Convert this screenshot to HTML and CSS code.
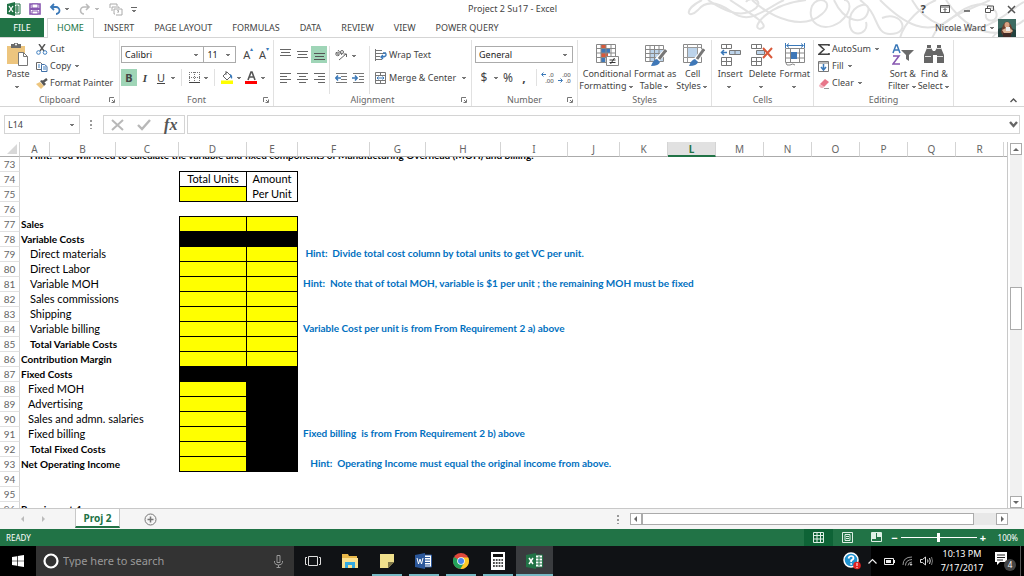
FILE: index.html
```html
<!DOCTYPE html>
<html lang="en">
<head>
	<meta charset="utf-8">
	<title>Project 2 Su17 - Excel</title>
	<link rel="stylesheet" href="styles.css">
</head>
<body>

<header class="titlebar">
	<svg class="swirl" viewBox="0 0 340 38" width="340" height="38">
		<g fill="none" stroke="#e2e2e2" stroke-width="2">
			<path d="M18 0C-2 10 4 20 14 10C22 0 34 2 48 12C66 26 82 8 100 0"/>
			<path d="M24 0C44 14 60 18 72 8C80 0 66 -4 62 2M46 0C70 16 88 26 76 29C66 28 84 4 122 0"/>
			<path d="M68 0C90 20 120 30 138 14C152 2 134 -6 128 6C122 22 138 34 156 22C170 10 166 0 160 0"/>
			<path d="M150 0C160 22 180 26 184 12C188 0 168 4 166 18C162 40 186 36 182 22M176 0C196 14 190 34 206 34C228 34 218 10 198 18"/>
			<path d="M196 0C220 24 244 38 268 18C286 2 304 0 312 12C316 22 300 24 302 14M228 0C240 22 270 36 296 28C320 20 328 8 340 2"/>
			<path d="M262 0C276 22 300 40 328 30M248 38C256 18 286 10 306 0M216 38C220 22 238 6 252 0M308 38C316 26 330 30 340 20"/>
		</g>
	</svg>
	<div class="quick">
		<svg width="14" height="14" viewBox="0 0 14 14"><path d="M7 2h6v10H7z" fill="#fff" stroke="#217346"/><path d="M8 5h4M8 7h4M8 9h4M10 3v8" stroke="#217346"/><path d="M0 2l8-2v14l-8-2z" fill="#217346"/><path d="M2 4l4 6M6 4l-4 6" stroke="#fff" stroke-width="1.3"/></svg>
		<button aria-label="Save"><svg width="12" height="12" viewBox="0 0 12 12"><path d="M1 1h10v10H1z" fill="#fff" stroke="#8757b0" stroke-width="1.6"/><path d="M3 1h6v4H3zM3 8h6v3H3z" fill="#fff" stroke="#8757b0"/><path d="M1 5h10v2H1z" fill="#8757b0"/></svg></button>
		<button aria-label="Undo"><svg width="12" height="12" viewBox="0 0 12 12"><path d="M2 4h5a3.3 3.3 0 010 7M5 1L2 4l3 3" fill="none" stroke="#3a78b8" stroke-width="1.8"/></svg><i class="caret"></i></button>
		<button aria-label="Redo"><svg width="12" height="12" viewBox="0 0 12 12"><path d="M10 4H5a3.3 3.3 0 000 7M7 1l3 3-3 3" fill="none" stroke="#bbb" stroke-width="1.6"/></svg><i class="caret pale"></i></button>
		<button aria-label="Group help"><svg width="14" height="13" viewBox="0 0 14 13" fill="none" stroke="#aaa"><path d="M1 5V1h7v2M3 8V4h7v1M6 11H5V6h8v6H7"/><path d="M8 8q1-1 2 0l-1 1v1"/></svg></button>
		<button aria-label="Customize toolbar"><i class="caret over"></i></button>
	</div>
	<h1>Project 2 Su17 - Excel</h1>
	<div class="winbtns">
		<button aria-label="Help"><b>?</b></button>
		<button aria-label="Ribbon options"><svg width="10" height="9" viewBox="0 0 10 9" fill="none" stroke="#555"><path d="M.5.5h9v7h-9zM.5 2h9M5 7V4M3.500 5L5 3.500 6.500 5"/></svg></button>
		<button aria-label="Minimize"><svg width="8" height="8" viewBox="0 0 8 8"><path d="M1 6h6" stroke="#555" stroke-width="1.5"/></svg></button>
		<button aria-label="Restore"><svg width="9" height="9" viewBox="0 0 9 9" fill="none" stroke="#555"><path d="M.5 3.500h5v4h-5zM2.500 3V1h6v4.500H6"/></svg></button>
		<button aria-label="Close"><svg width="9" height="9" viewBox="0 0 9 9"><path d="M1 1l7 7M8 1L1 8" stroke="#555" stroke-width="1.5"/></svg></button>
	</div>
</header>

<nav class="tabs">
	<a class="file" href="#">FILE</a>
	<a class="active" href="#">HOME</a>
	<a href="#">INSERT</a>
	<a href="#">PAGE LAYOUT</a>
	<a href="#">FORMULAS</a>
	<a href="#">DATA</a>
	<a href="#">REVIEW</a>
	<a href="#">VIEW</a>
	<a href="#">POWER QUERY</a>
	<button class="user">Nicole Ward <i class="caret"></i>
		<svg width="18" height="18" viewBox="0 0 18 18"><path d="M0 0h18v18H0z" fill="#3d6b62"/><path d="M0 10l5-2v10H0zM13 9l5 2v7h-5z" fill="#23423f"/><path d="M5 6q4-7 8 0l2 6-3 6H6l-3-5z" fill="#6b4030"/><ellipse cx="9" cy="6" rx="2.500" ry="3" fill="#d9a282"/><path d="M4 11l4-2h4l3 3-3 2H6z" fill="#dcb598"/><path d="M8 8h4v4H8z" fill="#eee"/><path d="M5 14h8v4H5z" fill="#432b27"/></svg>
	</button>
</nav>

<section class="ribbon">
	<div class="group clipboard">
		<div class="body">
			<button class="big paste"><svg width="22" height="24" viewBox="0 0 22 24"><path d="M0 3h18v18H0z" fill="#edc57e"/><path d="M4 1h3a2 2 0 014 0h3v4H4z" fill="#6b6b6b"/><circle cx="9" cy="1.500" r="1" fill="#fff"/><path d="M11.500 9.500h5l4 4v9h-9z" fill="#fff" stroke="#777"/><path d="M16.500 9.500v4h4" fill="none" stroke="#777"/></svg><span>Paste<br><i class="caret"></i></span></button>
			<div class="stack">
				<button><svg width="12" height="11" viewBox="0 0 12 11"><path d="M3 0l5 7M9 0L4 7" stroke="#555" stroke-width="1.4"/><circle cx="2.500" cy="8.500" r="1.800" fill="none" stroke="#3f7fc0"/><circle cx="9" cy="8.500" r="1.800" fill="none" stroke="#3f7fc0"/></svg>Cut</button>
				<button><svg width="12" height="11" viewBox="0 0 12 11"><path d="M.5 1.500h4l2 2v5h-6z" fill="#fff" stroke="#666"/><path d="M5.500 3.500h3l2.500 2v5H5.500z" fill="#fff" stroke="#3f6fa8"/><path d="M2 4h2M2 6h2M7 6h3M7 8h3" stroke="#3f7fc0"/></svg>Copy <i class="caret"></i></button>
				<button><svg width="12" height="11" viewBox="0 0 12 11"><path d="M0 6l4-2 4 4-3 3z" fill="#edc57e"/><path d="M4 3l2-1 4 4-2 2z" fill="#555"/><path d="M7 4l4-3" stroke="#555" stroke-width="2.400"/></svg>Format Painter</button>
			</div>
		</div>
		<div class="name"><span>Clipboard</span><svg class="launch" width="6" height="6" viewBox="0 0 6 6"><path d="M.5 5V.5H5M3 3l2 2M5.500 2.500v3h-3" fill="none" stroke="#777"/></svg></div>
	</div>

	<div class="group font">
		<div class="body rows">
			<div class="row">
				<select class="face" aria-label="Font"><option>Calibri</option></select>
				<select class="size" aria-label="Font size"><option>11</option></select>
				<button class="tool grow" aria-label="Increase font size">A<sup>▴</sup></button>
				<button class="tool shrink" aria-label="Decrease font size">A<sup>▾</sup></button>
			</div>
			<div class="row">
				<button class="tool on"><b>B</b></button>
				<button class="tool"><em>I</em></button>
				<button class="tool"><u>U</u></button><i class="caret"></i>
				<span class="sep"></span>
				<button class="tool" aria-label="Borders"><svg width="11" height="11" viewBox="0 0 11 11" fill="none" stroke="#777"><path d="M.5 0v10M5.500 0v10M10.500 0v10M0 .5h11M0 5.500h11" stroke-dasharray="1 1"/><path d="M0 10.500h11" stroke="#444"/></svg></button><i class="caret"></i>
				<span class="sep"></span>
				<button class="tool" aria-label="Fill color"><svg width="13" height="13" viewBox="0 0 13 13"><path d="M2 5l4-4 4 4-4 4zM5 4V0" fill="#fff" stroke="#666"/><path d="M9 3q3 1 2 5l-2-2z" fill="#3a78b8"/><path d="M0 9.500h12V13H0z" fill="#ff0"/></svg></button><i class="caret"></i>
				<button class="tool" aria-label="Font color"><svg width="13" height="13" viewBox="0 0 13 13"><path d="M3 9l3-8h1l3 8M4.300 6h4.400" fill="none" stroke="#555" stroke-width="1.600"/><path d="M0 10h12v3H0z" fill="#f00"/></svg></button><i class="caret"></i>
			</div>
		</div>
		<div class="name"><span>Font</span><svg class="launch" width="6" height="6" viewBox="0 0 6 6"><path d="M.5 5V.5H5M3 3l2 2M5.500 2.500v3h-3" fill="none" stroke="#777"/></svg></div>
	</div>

	<div class="group align">
		<div class="body cols">
			<div class="pad">
				<button class="tool" aria-label="Top align"><svg width="11" height="11" viewBox="0 0 11 11"><path d="M0 .5h11M1 3.500h9M0 6.500h11" stroke="#666"/></svg></button>
				<button class="tool" aria-label="Middle align"><svg width="11" height="11" viewBox="0 0 11 11"><path d="M0 2.500h11M1 5.500h9M0 8.500h11" stroke="#666"/></svg></button>
				<button class="tool on" aria-label="Bottom align"><svg width="11" height="11" viewBox="0 0 11 11"><path d="M0 4.500h11M1 7.500h9M0 10.500h11" stroke="#555"/></svg></button>
				<button class="tool" aria-label="Align left"><svg width="11" height="11" viewBox="0 0 11 11"><path d="M0 1.500h11M0 4.500h7M0 7.500h11M0 10.500h7" stroke="#666"/></svg></button>
				<button class="tool" aria-label="Center"><svg width="11" height="11" viewBox="0 0 11 11"><path d="M0 1.500h11M2 4.500h7M0 7.500h11M2 10.500h7" stroke="#666"/></svg></button>
				<button class="tool" aria-label="Align right"><svg width="11" height="11" viewBox="0 0 11 11"><path d="M0 1.500h11M4 4.500h7M0 7.500h11M4 10.500h7" stroke="#666"/></svg></button>
			</div>
			<div class="pad two">
				<button class="tool" aria-label="Orientation"><svg width="13" height="12" viewBox="0 0 13 12" fill="none" stroke="#666"><circle cx="2.500" cy="5" r="1.700"/><path d="M4 7L1 3M3 1l4 5"/><circle cx="7" cy="3" r="1.500"/><path d="M4 11l7-6M8.500 5H11.500v3"/></svg></button><i class="caret"></i>
				<button class="tool" aria-label="Decrease indent"><svg width="13" height="11" viewBox="0 0 13 11"><path d="M1 1.500h11M6 4.500h6M6 7.500h6M1 10.500h11" stroke="#777"/><path d="M6 6H1M3 3.500L.8 6 3 8.500" fill="none" stroke="#3a78b8" stroke-width="1.500"/></svg></button>
				<button class="tool" aria-label="Increase indent"><svg width="13" height="11" viewBox="0 0 13 11"><path d="M1 1.500h11M7 4.500h5M7 7.500h5M1 10.500h11" stroke="#777"/><path d="M0 6h5M3 3.500L5.200 6 3 8.500" fill="none" stroke="#3a78b8" stroke-width="1.500"/></svg></button>
			</div>
			<div class="rows">
				<button class="row text"><svg width="12" height="12" viewBox="0 0 12 12"><path d="M0 1.500h7M0 4.500h10M0 7.500h5M0 10.500h7M.5 0v12" stroke="#777"/><path d="M8 4h2.500q2 4-4 4M8 6L6 8l2 2" fill="none" stroke="#3a78b8" stroke-width="1.400"/></svg>Wrap Text</button>
				<button class="row text"><svg width="12" height="12" viewBox="0 0 12 12" fill="none" stroke="#777"><path d="M.5.5h10v11H.5zM.5 3.500h10M.5 8.500h10M5.500 0v3M5.500 9v3"/><path d="M2 6h7M3.500 4.500L2 6l1.500 1.500M7.500 4.500L9 6 7.500 7.500" stroke="#3a78b8"/></svg>Merge &amp; Center <i class="caret"></i></button>
			</div>
		</div>
		<div class="name"><span>Alignment</span><svg class="launch" width="6" height="6" viewBox="0 0 6 6"><path d="M.5 5V.5H5M3 3l2 2M5.500 2.500v3h-3" fill="none" stroke="#777"/></svg></div>
	</div>

	<div class="group number">
		<div class="body rows">
			<div class="row"><select class="format" aria-label="Number format"><option>General</option></select></div>
			<div class="row">
				<button class="tool sym">$</button><i class="caret"></i>
				<button class="tool sym">%</button>
				<button class="tool sym"><b>,</b></button>
				<span class="sep"></span>
				<button class="tool dec" aria-label="Increase decimal"><small>.0<br>.00</small><svg width="5" height="5" viewBox="0 0 5 5"><path d="M5 2.500H1M2.500.5l-2 2 2 2" fill="none" stroke="#3a78b8"/></svg></button>
				<button class="tool dec end" aria-label="Decrease decimal"><small>.00<br>.0</small><svg width="5" height="5" viewBox="0 0 5 5"><path d="M0 2.500h4M2.500.5l2 2-2 2" fill="none" stroke="#3a78b8"/></svg></button>
			</div>
		</div>
		<div class="name"><span>Number</span><svg class="launch" width="6" height="6" viewBox="0 0 6 6"><path d="M.5 5V.5H5M3 3l2 2M5.500 2.500v3h-3" fill="none" stroke="#777"/></svg></div>
	</div>

	<div class="group styles">
		<div class="body">
			<button class="big wide"><svg width="24" height="24" viewBox="0 0 24 24"><path d="M1 1h20v18H1z" fill="#fff"/><path d="M6 1h5v4H6zM6 10h7v4H6z" fill="#d9593a"/><path d="M6 5.500h9V10H6zM6 15h4v4H6z" fill="#3f78b8"/><path d="M1.500 1.500h19v18h-19zM1 5.500h20M1 10h20M1 14.500h20M6 1v18M11 1v18M16 1v18" fill="none" stroke="#888"/><path d="M11.500 13.500h12v9h-12z" fill="#fff" stroke="#888"/><path d="M14.500 17h6M14.500 19.500h6M19.500 15l-4 6" stroke="#333"/></svg><span>Conditional<br>Formatting <i class="caret"></i></span></button>
			<button class="big"><svg width="24" height="24" viewBox="0 0 24 24"><path d="M2.500 2.500h18v16h-18z" fill="#fff"/><path d="M7 7h13v11H7z" fill="#bcd3ea"/><path d="M2.500 2.500h18v16h-18zM2 6.500h18M2 10.500h18M2 14.500h18M7 2v16M11.500 2v16M16 2v16" fill="none" stroke="#888"/><path d="M23 8L14 17" stroke="#fff" stroke-width="5"/><path d="M23 7l-7 9" stroke="#777" stroke-width="3"/><path d="M8 23q2-6 6-7l3 3q-1 4-9 4z" fill="#3f78b8"/></svg><span>Format as<br>Table <i class="caret"></i></span></button>
			<button class="big"><svg width="24" height="24" viewBox="0 0 24 24"><path d="M2.500 1.500h18v18h-18z" fill="#fff" stroke="#888"/><path d="M6 5h11v9H6z" fill="#bcd3ea"/><path d="M2 4.500h18M2 14.500h18M6.500 1v18M16.500 1v18" stroke="#999"/><path d="M23 7l-9 11" stroke="#fff" stroke-width="5"/><path d="M23 6l-7 10" stroke="#777" stroke-width="3"/><path d="M8 23q2-6 6-7l3 3q-1 4-9 4z" fill="#3f78b8"/></svg><span>Cell<br>Styles <i class="caret"></i></span></button>
		</div>
		<div class="name"><span>Styles</span></div>
	</div>

	<div class="group cells">
		<div class="body">
			<button class="big"><svg width="22" height="24" viewBox="0 0 22 24" fill="none" stroke="#777"><path d="M2.500 1.500h10v4h-10zM7.500 1v4M2.500 14.500h10v8h-10zM7.500 14v8M2 18.500h11"/><path d="M10.500 7.500h11v4h-11zM16 7v4" fill="#bcd3ea"/><path d="M8 9.500H3M5 7L2.500 9.500 5 12" stroke="#3a78b8" stroke-width="1.500"/></svg><span>Insert<br><i class="caret"></i></span></button>
			<button class="big"><svg width="22" height="24" viewBox="0 0 22 24" fill="none" stroke="#777"><path d="M.5 1.500h10v4H.5zM5.500 1v4M.5 14.500h10v8H.5zM5.500 14v8M0 18.500h11"/><path d="M5.500 7.500h8v4h-8z" fill="#bcd3ea"/><path d="M12 5l9 10M21 5l-9 10" stroke="#d9593a" stroke-width="2"/></svg><span>Delete<br><i class="caret"></i></span></button>
			<button class="big"><svg width="24" height="24" viewBox="0 0 24 24" fill="none" stroke="#888"><path d="M2.500 5.500h19v14h-19zM2 10h20M2 15h20M7.500 5v14M16.500 5v14"/><path d="M8 9h6v7H8z" fill="#3f78b8" stroke="none"/><path d="M3 20q0 3 4 2 3-2 5 0"/><path d="M4 2.500h16M6 .5l-2.500 2L6 4.500M18 .5l2.500 2-2.500 2M2.500 0v5M21.500 0v5" stroke="#3a78b8"/></svg><span>Format<br><i class="caret"></i></span></button>
		</div>
		<div class="name"><span>Cells</span></div>
	</div>

	<div class="group editing">
		<div class="body">
			<div class="stack">
				<button><svg width="12" height="11" viewBox="0 0 12 11"><path d="M11 2V.8H1L6 5.500 1 10.200h10V9" fill="none" stroke="#444" stroke-width="1.600"/></svg>AutoSum <i class="caret"></i></button>
				<button><svg width="12" height="11" viewBox="0 0 12 11"><path d="M.5.500h10v10H.5zM0 2h11" fill="none" stroke="#777"/><path d="M5.500 3v6M3 6l2.500 3L8 6" fill="none" stroke="#3a78b8" stroke-width="1.500"/></svg>Fill <i class="caret"></i></button>
				<button><svg width="12" height="11" viewBox="0 0 12 11"><path d="M2 6l5-5 4 3-5 5z" fill="#e8768a"/><path d="M2 6l4 3-1 1H3L.8 8z" fill="#f3b6c0"/><path d="M6 10.500h5" stroke="#999"/></svg>Clear <i class="caret"></i></button>
			</div>
			<button class="big"><svg width="22" height="24" viewBox="0 0 22 24"><path d="M1 10l3-8h1l3 8M2.200 7h4.600" fill="none" stroke="#3a78b8" stroke-width="1.500"/><path d="M1 13h6l-6 8h7" fill="none" stroke="#8757b0" stroke-width="1.500"/><path d="M9 7h13l-5 5v6l-3-2v-4z" fill="#6b6b6b"/></svg><span>Sort &amp;<br>Filter <i class="caret"></i></span></button>
			<button class="big"><svg width="22" height="24" viewBox="0 0 22 24"><path d="M4 2h4v3l2 3h2l2-3V2h4v3l3 7v8h-7v-8h-4v8H1v-8l3-7z" fill="#666"/><path d="M2 13.500h6M14 13.500h6M4 5.500h4M14 5.500h4" stroke="#ddd"/></svg><span>Find &amp;<br>Select <i class="caret"></i></span></button>
		</div>
		<div class="name"><span>Editing</span></div>
	</div>
	<button class="collapse" aria-label="Collapse the ribbon"><svg width="7" height="5" viewBox="0 0 7 5"><path d="M.5 4l3-3 3 3" fill="none" stroke="#555" stroke-width="1.400"/></svg></button>
</section>

<section class="formula">
	<label class="namebox"><input type="text" value="L14" aria-label="Name box"><i class="caret"></i></label>
	<span class="dots"></span>
	<div class="fx">
		<button aria-label="Cancel"><svg width="13" height="12" viewBox="0 0 13 12"><path d="M1 1l11 10M12 1L1 11" stroke="#b8b8b8" stroke-width="2"/></svg></button>
		<button aria-label="Enter"><svg width="14" height="12" viewBox="0 0 14 12"><path d="M1 6l4 4 8-9" fill="none" stroke="#b8b8b8" stroke-width="2.400"/></svg></button>
		<button class="fn"><em>fx</em></button>
	</div>
	<label class="entry"><input type="text" aria-label="Formula"><svg width="9" height="7" viewBox="0 0 9 7"><path d="M1 1l3.500 4L8 1" fill="none" stroke="#666" stroke-width="2.400"/></svg></label>
</section>

<main class="sheet">
	<div class="grid">
		<table class="heads">
			<colgroup><col class="c-num"><col class="c-a"><col class="c-b"><col class="c-c"><col class="c-d"><col class="c-e"><col class="c-f"><col class="c-g"><col class="c-h"><col class="c-i"><col class="c-j"><col class="c-std"><col class="c-std"><col class="c-std"><col class="c-std"><col class="c-std"><col class="c-std"><col class="c-std"><col class="c-std"><col></colgroup>
			<tr><th class="corner"><svg width="10" height="10" viewBox="0 0 10 10"><path d="M10 0v10H0z" fill="#d8d8d8"/></svg></th><th>A</th><th>B</th><th>C</th><th>D</th><th>E</th><th>F</th><th>G</th><th>H</th><th>I</th><th>J</th><th>K</th><th class="sel">L</th><th>M</th><th>N</th><th>O</th><th>P</th><th>Q</th><th>R</th><th></th></tr>
		</table>
		<div class="view">
			<table class="cellset">
				<colgroup><col class="c-num"><col class="c-a"><col class="c-b"><col class="c-c"><col class="c-d"><col class="c-e"><col></colgroup>
				<tr><th>73</th><td colspan="6"><div class="above">Hint:&nbsp; You will need to calculate the variable and fixed components of Manufacturing Overhead (MOH) and billing.</div></td></tr>
				<tr><th>74</th><td colspan="3"></td><td class="box top">Total Units</td><td class="box top open">Amount</td><td></td></tr>
				<tr><th>75</th><td colspan="3"></td><td class="box fill"></td><td class="box">Per Unit</td><td></td></tr>
				<tr><th>76</th><td colspan="3"></td><td></td><td></td><td></td></tr>
				<tr><th>77</th><td colspan="3"><b>Sales</b></td><td class="box fill top"></td><td class="box fill top"></td><td></td></tr>
				<tr><th>78</th><td colspan="3"><b>Variable Costs</b></td><td class="box black"></td><td class="box black"></td><td></td></tr>
				<tr><th>79</th><td colspan="3" class="in2">Direct materials</td><td class="box fill"></td><td class="box fill"></td><td class="hint">&nbsp;Hint:&nbsp; Divide total cost column by total units to get VC per unit.</td></tr>
				<tr><th>80</th><td colspan="3" class="in2">Direct Labor</td><td class="box fill"></td><td class="box fill"></td><td></td></tr>
				<tr><th>81</th><td colspan="3" class="in2">Variable MOH</td><td class="box fill"></td><td class="box fill"></td><td class="hint">Hint:&nbsp; Note that of total MOH, variable is $1 per unit ; the remaining MOH must be fixed</td></tr>
				<tr><th>82</th><td colspan="3" class="in2">Sales commissions</td><td class="box fill"></td><td class="box fill"></td><td></td></tr>
				<tr><th>83</th><td colspan="3" class="in2">Shipping</td><td class="box fill"></td><td class="box fill"></td><td></td></tr>
				<tr><th>84</th><td colspan="3" class="in2">Variable billing</td><td class="box fill"></td><td class="box fill"></td><td class="hint">Variable Cost per unit is from From Requirement 2 a) above</td></tr>
				<tr><th>85</th><td colspan="3" class="in2"><b>Total Variable Costs</b></td><td class="box fill"></td><td class="box fill"></td><td></td></tr>
				<tr><th>86</th><td colspan="3"><b>Contribution Margin</b></td><td class="box fill"></td><td class="box fill"></td><td></td></tr>
				<tr><th>87</th><td colspan="3"><b>Fixed Costs</b></td><td class="box black"></td><td class="box black"></td><td></td></tr>
				<tr><th>88</th><td colspan="3" class="in1">Fixed MOH</td><td class="box fill"></td><td class="box black"></td><td></td></tr>
				<tr><th>89</th><td colspan="3" class="in1">Advertising</td><td class="box fill"></td><td class="box black"></td><td></td></tr>
				<tr><th>90</th><td colspan="3" class="in1">Sales and admn. salaries</td><td class="box fill"></td><td class="box black"></td><td></td></tr>
				<tr><th>91</th><td colspan="3" class="in1">Fixed billing</td><td class="box fill"></td><td class="box black"></td><td class="hint">Fixed billing&nbsp; is from From Requirement 2 b) above</td></tr>
				<tr><th>92</th><td colspan="3" class="in2"><b>Total Fixed Costs</b></td><td class="box fill"></td><td class="box black"></td><td></td></tr>
				<tr><th>93</th><td colspan="3"><b>Net Operating Income</b></td><td class="box fill"></td><td class="box black"></td><td class="hint">&nbsp;&nbsp; Hint:&nbsp; Operating Income must equal the original income from above.</td></tr>
				<tr><th>94</th><td colspan="6"></td></tr>
				<tr><th>95</th><td colspan="6"></td></tr>
				<tr><th>96</th><td colspan="6"><b>Requirment 4:</b></td></tr>
			</table>
		</div>
	</div>
	<div class="vscroll">
		<button aria-label="Scroll up"><i class="tri up"></i></button>
		<span class="before"></span><span class="thumb"></span><span class="after"></span>
		<button aria-label="Scroll down"><i class="tri down"></i></button>
	</div>
</main>

<section class="sheetbar">
	<button aria-label="Previous sheet"><i class="tri left pale"></i></button>
	<button aria-label="Next sheet"><i class="tri right pale"></i></button>
	<a class="sheettab" href="#">Proj 2</a>
	<button class="add" aria-label="New sheet"><svg width="13" height="13" viewBox="0 0 13 13" fill="none" stroke="#777"><circle cx="6.500" cy="6.500" r="5.500"/><path d="M6.500 3.500v6M3.500 6.500h6" stroke-width="1.500"/></svg></button>
	<span class="dots"></span>
	<div class="hscroll">
		<button aria-label="Scroll left"><i class="tri left"></i></button>
		<span class="thumb"></span><span class="after"></span>
		<button aria-label="Scroll right"><i class="tri right"></i></button>
	</div>
</section>

<footer class="status">
	<span>READY</span>
	<button class="on" aria-label="Normal view"><svg width="11" height="11" viewBox="0 0 11 11"><path d="M.5.500h10v10H.5zM0 3.500h11M0 7h11M4 0v11M7.500 0v11" fill="none" stroke="#dff0e6"/></svg></button>
	<button aria-label="Page layout view"><svg width="11" height="11" viewBox="0 0 11 11"><path d="M.5.500h10v10H.5zM3 2.500h5v6H3zM4 4.500h3M4 6.500h3" fill="none" stroke="#dff0e6"/></svg></button>
	<button aria-label="Page break view"><svg width="11" height="11" viewBox="0 0 11 11"><path d="M.5.500h10v9H.5z" fill="none" stroke="#dff0e6"/><path d="M1 1h4v6H1zM6 1h4v4H6z" fill="#dff0e6"/></svg></button>
	<div class="zoom"><b>−</b><input type="range" min="10" max="190" value="100" aria-label="Zoom"><b>+</b></div>
	<span class="pct">100%</span>
</footer>

<footer class="taskbar">
	<button class="start" aria-label="Start"><svg width="12" height="12" viewBox="0 0 12 12"><path d="M0 2l5-.8v4.500H0zM5.700 1L12 0v5.700H5.700zM0 6.300h5v4.500L0 10zM5.700 6.300H12V12l-6.300-1z" fill="#fff"/></svg></button>
	<label class="search">
		<svg width="16" height="16" viewBox="0 0 16 16"><circle cx="8" cy="8" r="6.500" fill="none" stroke="#fff" stroke-width="2.200"/></svg>
		<input type="text" placeholder="Type here to search" aria-label="Search">
		<svg width="9" height="13" viewBox="0 0 9 13" fill="none" stroke="#999"><path d="M3 .5h3v7H3zM.5 6v1.500Q1 10 4.500 10T8.500 7.500V6M4.500 10v2.500M2.500 12.500h4"/></svg>
	</label>
	<nav class="apps">
		<button aria-label="Task view"><svg width="16" height="12" viewBox="0 0 16 12" fill="none" stroke="#ddd"><path d="M3.500 1.500h9v9h-9zM2 2.500H.5v7H2M14 2.500h1.500v7H14"/></svg></button>
		<button aria-label="File Explorer"><svg width="16" height="14" viewBox="0 0 16 14"><path d="M0 0h6l1 2h8v12H0z" fill="#e8b84a"/><path d="M0 4h16v10H0z" fill="#fbe08f"/><path d="M3 14V8h10v6h-3v-3H6v3z" fill="#35a9e0"/></svg></button>
		<button class="open" aria-label="Sticky Notes"><svg width="14" height="14" viewBox="0 0 14 14"><path d="M0 0h14v8l-6 6H0z" fill="#f0e08c"/><path d="M14 8l-6 6V8z" fill="#7d7547"/></svg></button>
		<button class="open" aria-label="Word"><svg width="17" height="16" viewBox="0 0 17 16"><path d="M8 2h8.500v12H8z" fill="#fff" stroke="#2b579a"/><path d="M10 4.500h5M10 7h5M10 9.500h5M10 12h5" stroke="#2b579a"/><path d="M0 2l10-2v16L0 14z" fill="#2b579a"/><path d="M2 5l1.500 6L5 6l1.500 5L8 5" fill="none" stroke="#fff"/></svg></button>
		<button class="open" aria-label="Chrome"><svg width="16" height="16" viewBox="0 0 16 16"><circle cx="8" cy="8" r="8" fill="#e0483c"/><path d="M8 8L1 4a8 8 0 006.500 12L11.500 10z" fill="#23a15a"/><path d="M8 4.500h7.200A8 8 0 017.500 16L11.500 9z" fill="#fbc926"/><circle cx="8" cy="8" r="3.800" fill="#fff"/><circle cx="8" cy="8" r="3" fill="#4a86ea"/></svg></button>
		<button class="open" aria-label="Calculator"><svg width="14" height="18" viewBox="0 0 14 18"><path d="M0 0h14v18H0z" fill="#fff"/><path d="M2 2h10v3H2z" fill="#111"/><path d="M2 8h10M2 11h10M2 14h10" stroke="#111" stroke-width="1.600" stroke-dasharray="1.800 1"/></svg></button>
		<button class="open current" aria-label="Excel"><svg width="17" height="16" viewBox="0 0 17 16"><path d="M8 2h8.500v12H8z" fill="#fff" stroke="#217346"/><path d="M10 5h6M10 8h6M10 11h6M13 3v10" stroke="#217346"/><path d="M0 2l10-2v16L0 14z" fill="#217346"/><path d="M3 5l4 6M7 5l-4 6" stroke="#fff" stroke-width="1.500"/></svg></button>
	</nav>
	<div class="tray">
		<button aria-label="Help"><svg width="18" height="18" viewBox="0 0 18 18"><circle cx="8" cy="8" r="7" fill="#1f93d1" stroke="#fff" stroke-width="1.500"/><path d="M5.500 6.500Q6 4 8.300 4T10.500 6.500Q10 7.500 8.200 8.500V10M8.200 11.200v1.600" fill="none" stroke="#fff" stroke-width="1.700"/><circle cx="14" cy="13.500" r="3.800" fill="#e02020"/><path d="M14 11v3M14 15v1.200" stroke="#fff"/></svg></button>
		<button aria-label="Show hidden icons"><svg width="9" height="6" viewBox="0 0 9 6"><path d="M.5 5.500l4-4 4 4" fill="none" stroke="#eee" stroke-width="1.200"/></svg></button>
		<button aria-label="Battery"><svg width="11" height="7" viewBox="0 0 11 7"><path d="M.5.500h9v6h-9z" fill="none" stroke="#eee"/><path d="M2 2h5v3H2zM10 2h1v3h-1z" fill="#eee"/></svg></button>
		<button aria-label="Wi-Fi"><svg width="11" height="10" viewBox="0 0 11 10" fill="none" stroke="#999"><path d="M1 9Q1 1 10 1M3.500 9.500Q3.500 4 10 3.500M6 9.500Q6 6.500 10 6"/><circle cx="9" cy="8.500" r=".7" stroke="#fff"/></svg></button>
		<button aria-label="Volume"><svg width="13" height="10" viewBox="0 0 13 10" fill="none" stroke="#ddd"><path d="M.5 3.500h2L5.500 1v8L2.500 6.500h-2zM7.500 3.500q1 1.500 0 3M9.500 2q1.500 3 0 6"/><path d="M11.500 1q2 4 0 8" stroke="#777"/></svg></button>
		<time>10:13 PM<br>7/17/2017</time>
		<button class="notes" aria-label="Notifications"><svg width="18" height="18" viewBox="0 0 18 18"><path d="M0 0h12v10H5l-3 3v-3H0z" fill="#fff"/><path d="M2 3h8M2 5.500h8M2 8h6" stroke="#222"/></svg><span>4</span></button>
	</div>
</footer>

</body>
</html>
```

FILE: styles.css
```css
* { box-sizing:border-box; }
body { margin:0; height:100vh; display:flex; flex-direction:column; overflow:hidden; background:#fff; color:#444; font:9px/12px "Noto Sans", "Open Sans", sans-serif; }
button, input, select { font:inherit; color:inherit; border:0; background:none; padding:0; margin:0; border-radius:0; }
button { display:flex; align-items:center; justify-content:center; white-space:nowrap; }
a { color:inherit; text-decoration:none; }
svg { flex:none; display:block; }

/* little arrows */
.caret { flex:none; display:inline-block; width:8px; height:2px; background:linear-gradient(#777,#777) 3px 1px/2px 1px no-repeat, linear-gradient(#777,#777) 2px 0/4px 1px no-repeat; vertical-align:middle; }
.caret.pale { opacity:0.5; }
.caret.over { width:6px; height:5px; border-top:1px solid #666; background-position:2px 3px, 1px 2px; }
.tri { width:0; height:0; border:3px solid transparent; }
.tri.up { border-top:0; border-bottom-color:#666; }
.tri.down { border-bottom:0; border-top-color:#666; }
.tri.left { border-left:0; border-right-color:#666; }
.tri.right { border-right:0; border-left-color:#666; }
.tri.left.pale { border-right-color:#bbb; }
.tri.right.pale { border-left-color:#bbb; }

/* title bar */
.titlebar { position:relative; display:flex; align-items:center; justify-content:space-between; height:18px; padding:0 6px 0 7px; flex:none; }
.swirl { position:absolute; right:0; top:0; z-index:-1; }
.quick { flex:1; display:flex; align-items:center; gap:8px; }
.quick button { gap:2px; }
.titlebar h1 { margin:0; font-size:9px; font-weight:normal; }
.winbtns { flex:1; display:flex; justify-content:flex-end; gap:8px; }
.winbtns button { width:14px; }
.winbtns b { font-size:11px; }

/* ribbon tabs */
.tabs { display:flex; align-items:stretch; height:20px; flex:none; border-bottom:1px solid #d5d5d5; }
.tabs a { padding:4px 10px 0; }
.tabs a.file { width:44px; padding:4px 0 0; margin-right:3px; background:#217346; color:#fff; text-align:center; }
.tabs a.active { border:1px solid #d5d5d5; border-bottom:0; margin-bottom:-1px; padding:3px 9px 0; background:#fff; color:#217346; }
.user { margin-left:auto; padding-right:8px; gap:2px; }

/* ribbon */
.ribbon { position:relative; display:flex; height:69px; flex:none; border-bottom:1px solid #d5d5d5; }
.group { display:flex; flex-direction:column; border-right:1px solid #e1e1e1; margin:2px 0 0; }
.body { flex:1; min-height:0; display:flex; padding:3px 2px 0; }
.name { position:relative; flex:none; height:12px; text-align:center; color:#666; }
.launch { position:absolute; right:4px; bottom:3px; }
.clipboard { width:120px; }
.font { width:154px; }
.align { width:198px; }
.number { width:106px; }
.styles { width:134px; }
.cells { width:102px; }
.editing { width:140px; }
.big { flex-direction:column; justify-content:flex-start; flex:1; line-height:12px; }
.big.wide { flex:none; width:54px; }
.big span { margin-top:1px; }
.big .caret { margin-left:-2px; }
.big.paste { flex:none; width:32px; }
.stack { display:flex; flex-direction:column; gap:5px; padding:0 2px; }
.stack button { justify-content:flex-start; height:12px; gap:2px; }
.editing .stack { width:72px; }
.body.rows, .body.cols { padding:6px 1px 0; }
.rows { display:flex; flex-direction:column; gap:6px; }
.row { display:flex; align-items:center; height:17px; }
.tool { width:16px; height:17px; font-size:11px; }
.tool.on { background:#9fd5b7; }
.tool em { font-family:"Liberation Serif", serif; font-weight:bold; }
.grow { margin-left:4px; }
.tool sup { font-size:6px; line-height:6px; color:#3a78b8; align-self:flex-start; }
.sep { width:1px; height:17px; margin:0 4px; background:#e1e1e1; }
select { appearance:none; height:17px; padding:0 3px; border:1px solid #ababab; color:#222; background:linear-gradient(#777,#777) right 6px top 8px/2px 1px no-repeat, linear-gradient(#777,#777) right 5px top 7px/4px 1px no-repeat #fff; }
.face { width:84px; }
.size { width:33px; margin-left:-1px; }
.format { width:98px; margin-left:2px; }
.pad { display:grid; grid-template-columns:repeat(3,16px); gap:6px 1px; align-content:start; padding:0 2px; border-right:1px solid #e1e1e1; }
.pad.two { grid-template-columns:repeat(2,16px); align-items:center; padding:0 3px; }
.pad .caret { margin-top:2px; }
.cols .rows { padding-left:5px; }
.text { justify-content:flex-start; gap:2px; }
.text .caret { margin-left:2px; }
.sym { font-size:12px; }
.number .row + .row { padding-left:3px; }
.dec { position:relative; width:17px; }
.dec small { font-size:6px; line-height:6px; text-align:right; }
.dec svg { position:absolute; left:0; top:3px; }
.dec.end svg { top:9px; }
.collapse { position:absolute; right:7px; bottom:3px; }

/* formula bar */
.formula { display:flex; align-items:center; height:35px; flex:none; padding:0 4px; }
.namebox, .fx, .entry { display:flex; align-items:center; height:19px; border:1px solid #d4d4d4; background:#fff; }
.namebox { width:76px; padding:0 3px; }
.namebox input { width:100%; min-width:0; }
.dots { width:2px; height:9px; margin:0 11px 0 10px; background:repeating-linear-gradient(#999 0 2px, transparent 2px 4px); }
.fx { width:82px; justify-content:space-around; }
.fn { font:bold 16px/16px "Liberation Serif", serif; color:#555; }
.entry { flex:1; margin-left:2px; padding-right:1px; }
.entry input { flex:1; }

/* sheet */
.sheet { flex:1; display:flex; min-height:0; }
.grid { flex:1; display:flex; flex-direction:column; min-width:0; border-right:1px solid #c8c8c8; }
table { width:100%; table-layout:fixed; border-collapse:separate; border-spacing:0; }
.c-num { width:20px; }
.c-a { width:30px; }
.c-b { width:66px; }
.c-c { width:63px; }
.c-d { width:68px; }
.c-e { width:51px; }
.c-f { width:72px; }
.c-g { width:56px; }
.c-h { width:75px; }
.c-i { width:67px; }
.c-j { width:52px; }
.c-std { width:48px; }
th { padding:0; font-weight:normal; color:#666; border-right:1px solid #d4d4d4; }
.heads th { height:15px; line-height:13px; font-size:10px; border-bottom:1px solid #ababab; }
.heads th:last-child { border-right:0; }
.heads th.sel { background:#e1e1e1; color:#217346; font-weight:bold; line-height:12px; border-bottom:2px solid #217346; }
.corner svg { margin-left:7px; }
.view { flex:1; overflow:hidden; }
.cellset { font:11px/13px Lato, "Open Sans", sans-serif; font-variant-ligatures:none; color:#000; }
.cellset th { height:15px; font-size:10px; border-bottom:1px solid #e1e1e1; }
.cellset b, .hint, .above { font-size:10px; font-weight:bold; }
td { height:15px; padding:0 1px; white-space:nowrap; vertical-align:top; }
td.in1 { padding-left:8px; }
td.in2 { padding-left:10px; }
td.hint { padding-left:5px; color:#0070c0; }
/* row 72 is scrolled half under the headings */
.above { height:13px; margin:-8px 0 8px 9px; }
td.box { border-right:1px solid #000; border-bottom:1px solid #000; text-align:center; }
td:nth-child(3).box { border-left:1px solid #000; }
td.top { box-shadow:0 -1px #000; }
td.open { border-bottom:0; }
td.fill { background:#ff0; }
td.black { background:#000; }
.vscroll { display:flex; flex-direction:column; width:16px; padding:1px 2px 0; }
.vscroll button, .hscroll button { flex:none; width:12px; height:12px; border:1px solid #ababab; background:#fff; }
.vscroll .thumb { flex:42; border:1px solid #ababab; background:#fff; }
.vscroll .before { flex:134; background:#f1f1f1; }
.vscroll .after { flex:168; background:#f1f1f1; }

/* sheet tabs */
.sheetbar { display:flex; align-items:center; height:21px; flex:none; border-top:1px solid #c8c8c8; background:#f5f5f5; padding:0 16px 0 12px; }
.sheetbar > button { width:21px; }
.sheettab { align-self:flex-start; width:45px; height:19px; margin-left:21px; border:1px solid #c8c8c8; border-top:0; border-bottom:2px solid #217346; background:#fff; color:#217346; font:bold 10px/18px "Noto Sans", sans-serif; text-align:center; }
.sheetbar .add { margin-left:20px; }
.sheetbar .dots { margin-left:auto; }
.hscroll { display:flex; width:38%; height:12px; }
.hscroll .thumb { flex:338; border:1px solid #ababab; background:#fff; }
.hscroll .after { flex:22; background:#e8e8e8; }

/* status bar */
.status { display:flex; align-items:center; height:17px; flex:none; padding:0 6px; background:#217346; color:#fff; font-size:8px; }
.status button { width:29px; height:17px; }
.status button.on { margin-left:auto; background:#0e6336; }
.zoom { display:flex; align-items:center; gap:3px; font-size:11px; }
.zoom input { appearance:none; width:76px; height:11px; background:linear-gradient(#fff,#fff) 0 5px/100% 1px no-repeat; }
.zoom input::-webkit-slider-thumb { appearance:none; width:3px; height:9px; background:#fff; }
.pct { width:32px; text-align:right; }

/* taskbar */
.taskbar { display:flex; height:30px; flex:none; background:#101215; color:#fff; }
.start { width:36px; background:#000; }
.search { display:flex; align-items:center; width:258px; padding:0 11px 0 7px; gap:4px; background:#333; }
.search input { flex:1; min-width:0; font-size:11px; }
.search input::placeholder { color:#999; }
.apps { display:flex; }
.apps button { width:37px; }
.apps .open { background:linear-gradient(#76b9c4,#76b9c4) center bottom/30px 2px no-repeat; }
.apps .current { background:linear-gradient(#76b9c4,#76b9c4) center bottom/37px 2px no-repeat #3a3c3f; }
.tray { display:flex; align-items:center; gap:7px; margin-left:auto; padding-right:3px; background:linear-gradient(90deg, transparent 28px, #000 28px); }
.tray time { width:44px; font-size:9px; line-height:14px; text-align:center; }
.notes { position:relative; width:26px; height:30px; margin-left:4px; border-right:1px solid #555; }
.tray .notes { justify-content:flex-start; }
.notes span { position:absolute; left:9px; top:13px; width:12px; height:12px; border-radius:6px; background:#444; font-size:8px; text-align:center; }
```
